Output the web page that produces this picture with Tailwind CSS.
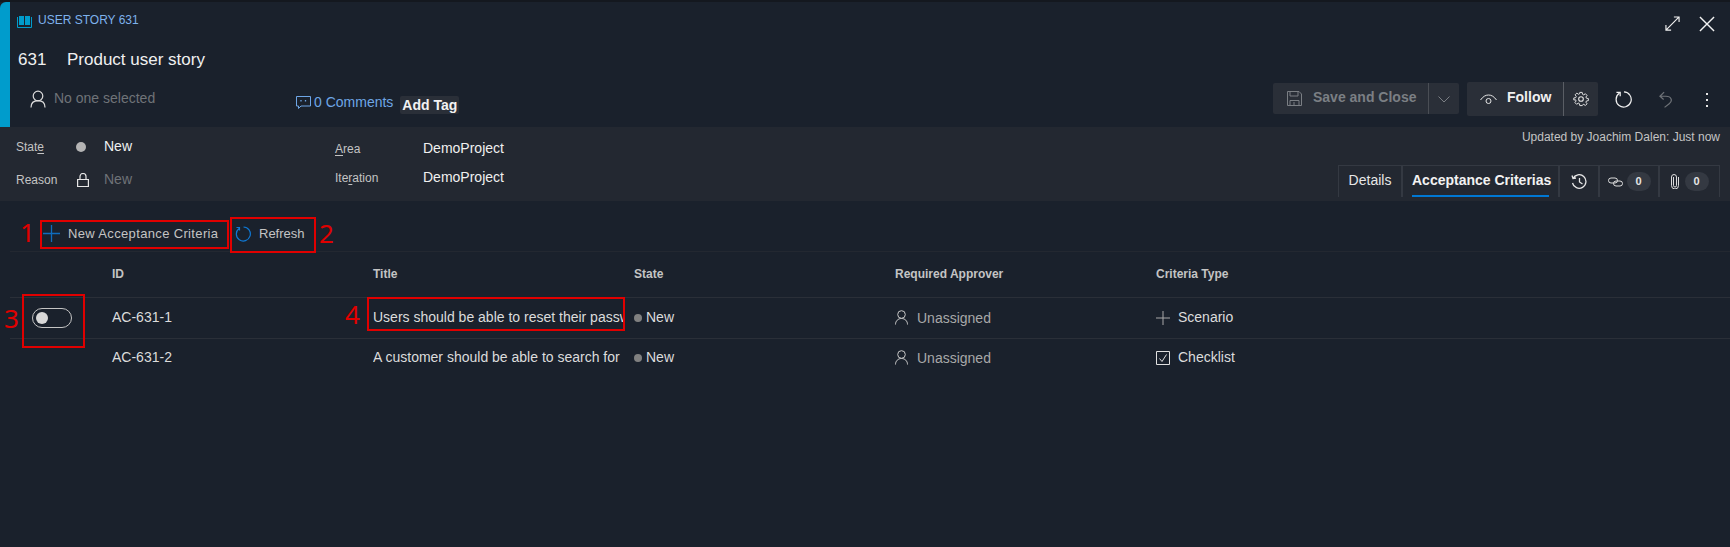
<!DOCTYPE html>
<html lang="en">
<head>
    <meta charset="UTF-8">
    <meta name="viewport" content="width=device-width, initial-scale=1.0">
    <title>User Story 631</title>
    <script src="https://cdn.jsdelivr.net/npm/@tailwindcss/browser@4"></script>
</head>
<body class="relative h-[547px] w-[1730px] overflow-hidden bg-[#1a212c] font-['Liberation_Sans',sans-serif] text-[#e6e6e6]">
    <div class="h-[2px] bg-[#14181f]"></div>

    <!-- Header -->
    <header class="flex h-[125px]">
        <div class="w-[10px] rounded-tl-md bg-[#009ccc]"></div>
        <div class="flex-1 flex flex-col">
            <div class="flex h-[36px] shrink-0 items-center justify-between pl-[7px] pr-[15px]">
                <div class="flex items-center gap-[6px] pb-[1px] text-[12px] text-[#7eb2ec]">
                    <svg width="15" height="13" viewBox="0 0 15 13" class="mt-[3px]"><path d="M2 1h5v9H2zM8 1h5v9H8z" fill="#009ccc"/><path d="M.5 2v10.500h14V2" fill="none" stroke="#009ccc"/></svg>
                    <span>USER STORY 631</span>
                </div>
                <div class="mt-[7px] flex items-center gap-[19px]">
                    <svg width="15" height="15" viewBox="0 0 16 16" fill="none" stroke="#f2f2f2" stroke-width="1.200"><path d="M1 15 15 1M9.500 1H15v5.500M1 9.500V15h5.500"/></svg>
                    <svg width="16" height="16" viewBox="0 0 17 17" fill="none" stroke="#f2f2f2" stroke-width="1.500"><path d="m1 1 15 15M16 1 1 16"/></svg>
                </div>
            </div>
            <div class="flex h-[43px] shrink-0 items-center pl-[8px] text-[17px] text-[#f0f0f0]">
                <span class="w-[49px]">631</span>
                <span>Product user story</span>
            </div>
            <div class="flex flex-1 items-start">
                <div class="flex w-[286px] items-center gap-[8px] pl-[20px] pt-[7px] text-[14px] text-[#6f7378]">
                    <svg width="16" height="18" viewBox="0 0 16 18" fill="none" stroke="#dcdcdc" stroke-width="1.200"><circle cx="8" cy="6" r="4.800"/><path d="M1 17.500c0-4.500 3-6.800 7-6.800s7 2.300 7 6.800"/></svg>
                    <span>No one selected</span>
                </div>
                <div class="flex items-center pt-[9px] text-[14px] text-[#6ea6e6]">
                    <svg width="15" height="15" viewBox="0 0 15 15" fill="none" stroke="#6ea6e6" class="mr-[3px]"><path d="M.5 1.500h14v9.500H5L2.500 13.500V11h-2z"/><path d="M5 5v1.500M9.500 5v1.500" stroke-width="1.300"/></svg>
                    <span>0 Comments</span>
                    <span class="ml-[7px] mt-[6px] rounded-[2px] bg-[#2a2f38] px-[2px] py-0 text-[14px] font-bold leading-[18px] text-[#f2f2f2]">Add Tag</span>
                </div>
                <div class="ml-auto flex items-start pt-[1px] pr-[22px]">
                    <div class="mt-[1px] flex h-[31px] w-[186px] items-center rounded-[2px] bg-[#2a2f38] text-[14px] font-bold text-[#7b7f84]">
                        <svg width="15" height="15" viewBox="0 0 15 15" fill="none" stroke="#7b7f84" class="ml-[14px]"><path d="M.5.500h11.500l2.500 2.500v11.500H.5z"/><path d="M3 .5v4.500h8V.5M3 14.500V9.500h9v5M7 11v3.500"/></svg>
                        <span class="ml-[11px] w-[115px] whitespace-nowrap pb-[2px]">Save and Close</span>
                        <div class="h-full w-px bg-[#4a4e55]"></div>
                        <svg width="12" height="7" viewBox="0 0 12 7" fill="none" stroke="#7b7f84" class="ml-[9px] mt-[1px]"><path d="m.5.5 5.500 5.500L11.500.5"/></svg>
                    </div>
                    <div class="ml-[8px] flex h-[34px] w-[131px] items-center rounded-[2px] bg-[#2a2f38] text-[14px] font-bold text-[#f0f0f0]">
                        <svg width="17" height="11" viewBox="0 0 17 11" fill="none" stroke="#e6e6e6" class="ml-[13px]"><path d="M.5 6C3 2.500 5.500 1 8.500 1s5.500 1.500 8 5"/><circle cx="8.500" cy="7" r="2.500"/></svg>
                        <span class="ml-[10px] w-[56px] pb-[3px]">Follow</span>
                        <div class="h-full w-px bg-[#5a5e65]"></div>
                        <svg width="16" height="16" viewBox="0 0 24 24" fill="none" stroke="#e6e6e6" stroke-width="1.600" class="ml-[9px]"><circle cx="12" cy="12" r="3.500"/><path d="M10 1h4l.6 3.200 2 .9 2.700-1.900 2.800 2.800-1.900 2.700.9 2 3.200.6v3.400l-3.200.6-.9 2 1.900 2.700-2.800 2.800-2.700-1.900-2 .9L14 23h-4l-.6-3.200-2-.9-2.700 1.900-2.800-2.800 1.900-2.700-.9-2L0 13.700v-3.400l3.200-.6.900-2-1.900-2.700 2.800-2.800 2.700 1.900 2-.9z" transform="translate(1.200 1.200) scale(.9)"/></svg>
                    </div>
                    <svg width="17" height="17" viewBox="0 0 18 18" fill="none" stroke="#f0f0f0" stroke-width="1.300" class="ml-[17px] mt-[9px]"><path d="M4.500 2.500A8 8 0 1 0 9.500 1M1.500 1.500h4v4"/></svg>
                    <svg width="13" height="17" viewBox="0 0 14 18" fill="none" stroke="#6f7378" stroke-width="1.300" class="ml-[27px] mt-[9px]"><path d="M5.500 1 1 5.500 5 9M1 5.500h6.500c6 0 7.500 5 3.500 8L6 17.500"/></svg>
                    <div class="ml-[34px] mt-[11px] flex flex-col gap-[4px]">
                        <div class="h-[2px] w-[2px] bg-[#e6e6e6]"></div>
                        <div class="h-[2px] w-[2px] bg-[#e6e6e6]"></div>
                        <div class="h-[2px] w-[2px] bg-[#e6e6e6]"></div>
                    </div>
                </div>
            </div>
        </div>
    </header>

    <!-- Fields band -->
    <section class="relative flex h-[74px] bg-[#232831] text-[12px]">
        <div class="grid w-[335px] grid-cols-[60px_28px_1fr] grid-rows-[33px_33px] items-center pl-[16px] pt-[3px]">
            <span class="text-[#c4c4c4]">Stat<u class="underline-offset-2">e</u></span>
            <span class="h-[10px] w-[10px] rounded-full bg-[#b4b4b4]"></span>
            <span class="text-[14px] text-[#f0f0f0]">New</span>
            <span class="text-[#c4c4c4]">Reason</span>
            <svg width="12" height="14" viewBox="0 0 12 14" fill="none" stroke="#e6e6e6" stroke-width="1.200" class="ml-[1px]"><path d="M.6 6.500h10.800v7H.6zM3 6.500V3.500a3 3 0 0 1 6 0v3"/></svg>
            <span class="text-[14px] text-[#6f7378]">New</span>
        </div>
        <div class="grid grid-cols-[88px_1fr] grid-rows-[29px_29px] items-center pt-[7px]">
            <span class="text-[#c4c4c4]"><u class="underline-offset-2">A</u>rea</span>
            <span class="text-[14px] text-[#f0f0f0]">DemoProject</span>
            <span class="text-[#c4c4c4]">Ite<u class="underline-offset-2">r</u>ation</span>
            <span class="text-[14px] text-[#f0f0f0]">DemoProject</span>
        </div>
        <div class="ml-auto flex flex-col items-end pr-[10px]">
            <span class="mt-[1px] text-[#c4c4c4]">Updated by Joachim Dalen: Just now</span>
            <div class="mt-[19px] flex h-[32px] border-x border-t border-[#343942] text-[14px]">
                <div class="flex w-[64px] justify-center border-r-2 border-[#343942] pt-[4px]">Details</div>
                <div class="w-[157px] border-r-2 border-[#343942] px-[9px] pt-[4px]">
                    <div class="h-[27px] whitespace-nowrap border-b-2 border-[#0078d4] font-bold text-[#f2f2f2]">Acceptance Criterias</div>
                </div>
                <div class="flex w-[40px] items-center justify-center border-r-2 border-[#343942]">
                    <svg width="16" height="15" viewBox="0 0 16 15" fill="none" stroke="#e6e6e6" stroke-width="1.300"><path d="M2 4.500A6.800 6.800 0 1 1 1.500 9M1 1.500l1 3 3-.5M8.500 4v4l3 2"/></svg>
                </div>
                <div class="flex w-[60px] items-center justify-center gap-[4px] border-r-2 border-[#343942]">
                    <svg width="15" height="10" viewBox="0 0 15 10" fill="none" stroke="#dcdcdc"><rect x=".5" y="1" width="9" height="5" rx="2.500"/><rect x="5.500" y="4" width="9" height="5" rx="2.500"/></svg>
                    <span class="flex h-[19px] w-[24px] items-center justify-center rounded-full bg-[#343942] pb-[1px] text-[11px] font-bold">0</span>
                </div>
                <div class="flex w-[59px] items-center justify-center gap-[6px]">
                    <svg width="8" height="15" viewBox="0 0 8 15" fill="none" stroke="#dcdcdc"><path d="M2.500 3v8.500a1.500 1.500 0 0 0 3 0V3a2.500 2.500 0 0 0-5 0v8.500a3.500 3.500 0 0 0 7 0V3"/></svg>
                    <span class="flex h-[19px] w-[24px] items-center justify-center rounded-full bg-[#343942] pb-[1px] text-[11px] font-bold">0</span>
                </div>
            </div>
        </div>
    </section>

    <!-- Acceptance criteria -->
    <main class="pl-[10px]">
        <div class="flex h-[51px] items-center border-b border-[#232831] pl-[33px] pt-[15px] text-[13px] text-[#c4c4c4]">
            <svg width="17" height="17" viewBox="0 0 17 17" fill="none" stroke="#0f6cbd" stroke-width="1.300"><path d="M8.500 0v17M0 8.500h17"/></svg>
            <span class="ml-[8px] w-[167px] whitespace-nowrap tracking-[.35px]">New Acceptance Criteria</span>
            <svg width="16" height="16" viewBox="0 0 16 16" fill="none" stroke="#0f78d4" stroke-width="1.200"><path d="M4 2.500A7 7 0 1 0 8.500 1M1.500 1.500h3v3"/></svg>
            <span class="ml-[8px]">Refresh</span>
        </div>
        <div class="grid grid-cols-[102px_261px_261px_261px_261px_1fr] text-[14px]">
            <div class="col-span-6 grid h-[46px] grid-cols-subgrid items-center border-b border-[#2a2f38] pb-[2px] text-[12px] font-bold text-[#c4c4c4]">
                <span></span><span>ID</span><span>Title</span><span>State</span><span>Required Approver</span><span>Criteria Type</span>
            </div>
            <div class="col-span-6 grid h-[41px] grid-cols-subgrid items-center border-b border-[#2a2f38] pb-[1px] text-[#dcdcdc]">
                <span class="ml-[22px] flex h-[20px] w-[40px] items-center rounded-full border border-[#c4c4c4] pl-[3px]"><span class="h-[12px] w-[12px] rounded-full bg-[#d8d8d8]"></span></span>
                <span>AC-631-1</span>
                <span class="w-[252px] overflow-hidden whitespace-nowrap">Users should be able to reset their password</span>
                <span class="flex items-center gap-[4px]"><span class="mt-[1px] h-[8px] w-[8px] rounded-full bg-[#808080]"></span>New</span>
                <span class="flex items-center gap-[9px] text-[#a8a8a8]">
                    <svg width="13" height="15" viewBox="0 0 13 15" fill="none" stroke="#c8c8c8"><circle cx="6.500" cy="4.500" r="3.800"/><path d="M.5 14.500c0-3.500 2.500-6 6-6s6 2.500 6 6"/></svg>
                    <span class="mt-[2px]">Unassigned</span>
                </span>
                <span class="flex items-center gap-[8px]">
                    <svg width="14" height="14" viewBox="0 0 14 14" fill="none" stroke="#a8a8a8"><path d="M7 0v14M0 7h14"/></svg>
                    <span>Scenario</span>
                </span>
            </div>
            <div class="col-span-6 grid h-[38px] grid-cols-subgrid items-center pb-[2px] text-[#dcdcdc]">
                <span></span>
                <span>AC-631-2</span>
                <span class="w-[252px] overflow-hidden whitespace-nowrap">A customer should be able to search for</span>
                <span class="flex items-center gap-[4px]"><span class="mt-[1px] h-[8px] w-[8px] rounded-full bg-[#808080]"></span>New</span>
                <span class="flex items-center gap-[9px] text-[#a8a8a8]">
                    <svg width="13" height="15" viewBox="0 0 13 15" fill="none" stroke="#c8c8c8"><circle cx="6.500" cy="4.500" r="3.800"/><path d="M.5 14.500c0-3.500 2.500-6 6-6s6 2.500 6 6"/></svg>
                    <span class="mt-[2px]">Unassigned</span>
                </span>
                <span class="flex items-center gap-[8px]">
                    <svg width="14" height="14" viewBox="0 0 14 14" fill="none" stroke="#e0e0e0" class="mt-[2px]"><path d="M.5.500h13v13H.5z"/><path d="m3.500 7.500 2.500 3 4.500-7"/></svg>
                    <span>Checklist</span>
                </span>
            </div>
        </div>
    </main>

    <!-- Red annotations drawn over the screenshot -->
    <div class="absolute left-[40px] top-[220px] h-[29px] w-[189px] border-2 border-[#e00000]"></div>
    <div class="absolute left-[230px] top-[217px] h-[36px] w-[86px] border-2 border-[#e00000]"></div>
    <div class="absolute left-[22px] top-[294px] h-[54px] w-[63px] border-2 border-[#e00000]"></div>
    <div class="absolute left-[367px] top-[297px] h-[34px] w-[258px] border-2 border-[#e00000]"></div>
    <span class="absolute left-[20px] top-[217px] font-['Noto_Sans',sans-serif] text-[26px] leading-[30px] text-[#e00000]">1</span>
    <span class="absolute left-[319px] top-[218px] font-['Noto_Sans',sans-serif] text-[26px] leading-[30px] text-[#e00000]">2</span>
    <span class="absolute left-[4px] top-[303px] font-['Noto_Sans',sans-serif] text-[26px] leading-[30px] text-[#e00000]">3</span>
    <span class="absolute left-[345px] top-[299px] font-['Noto_Sans',sans-serif] text-[26px] leading-[30px] text-[#e00000]">4</span>
</body>
</html>
